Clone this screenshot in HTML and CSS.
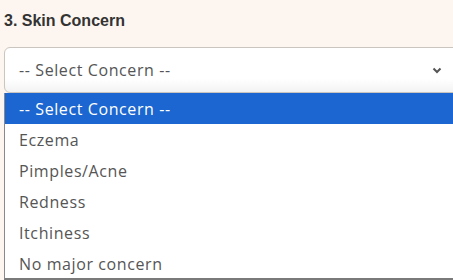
FILE: index.html
```html
<!DOCTYPE html>
<html>
<head>
<meta charset="utf-8">
<link rel="stylesheet" href="styles.css">
</head>
<body>
<div class="field">
  <h3 class="label">3. Skin Concern</h3>
  <div class="select">
    <span class="select-text">-- Select Concern --</span>
    <svg class="chev" width="10" height="7" viewBox="0 0 10 7"><path d="M1.5 1.5 L5 5 L8.5 1.5" fill="none" stroke="#555" stroke-width="2"/></svg>
  </div>
  <ul class="list">
    <li class="opt active">-- Select Concern --</li>
    <li class="opt">Eczema</li>
    <li class="opt">Pimples/Acne</li>
    <li class="opt">Redness</li>
    <li class="opt">Itchiness</li>
    <li class="opt">No major concern</li>
  </ul>
</div>
</body>
</html>
```
FILE: styles.css
```css
html, body {
  margin: 0;
  padding: 0;
  background: #fdf6f0;
  overflow: hidden;
}
.field {
  padding: 0 0 0 4px;
}
.label {
  margin: 0;
  padding-top: 12px;
  height: 35px;
  box-sizing: border-box;
  font-family: "Liberation Sans", Arial, sans-serif;
  font-weight: bold;
  font-size: 16px;
  color: #333;
}
.select {
  margin-top: 12px;
  height: 46px;
  box-sizing: border-box;
  margin-right: -6px;
  border: 1px solid #cbc5bf;
  border-radius: 6px;
  background: linear-gradient(#fff 70%, #f3f3f3);
  display: flex;
  align-items: center;
  justify-content: space-between;
  padding: 0 16px 0 14px;
  font-family: "Open Sans", sans-serif;
  font-size: 16px;
  letter-spacing: 0.6px;
  color: #555;
}
.chev {
  display: block;
}
.list {
  list-style: none;
  margin: 0 -10px 0 0;
  padding: 0;
  border-left: 1px solid #8a8a8a;
  border-bottom: 2px solid #7a7a7a;
  background: #fff;
  height: 187px;
  box-sizing: border-box;
  font-family: "Open Sans", sans-serif;
  font-size: 16px;
  letter-spacing: 0.6px;
  color: #555;
}
.opt {
  height: 31px;
  display: flex;
  align-items: center;
  padding-left: 14px;
}
.opt.active {
  background: #1b66d0;
  color: #fff;
}
```
